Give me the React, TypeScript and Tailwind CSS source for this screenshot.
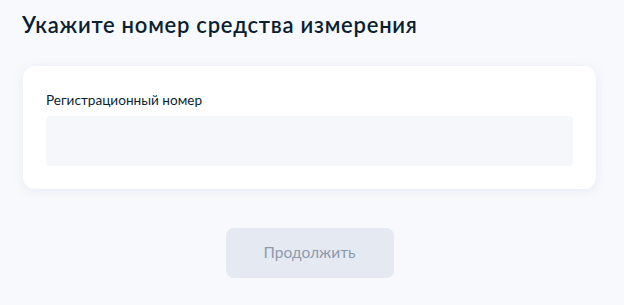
import React from "react";

function App() {
  return (
    <div className="min-h-screen w-full bg-[#f8f9fc] font-['Lato','Noto_Sans',sans-serif]">
      <div className="w-[573px] ml-[23px] pt-[11px]">
        {/* Title */}
        <h1 className="text-[22px] leading-[28px] font-semibold tracking-[0.75px] text-[#0b1f33] -ml-px">
          Укажите номер средства измерения
        </h1>

        {/* Card */}
        <div className="mt-[27px] bg-white rounded-xl shadow-[0_2px_12px_rgba(102,132,182,0.12)] px-[23px] pt-[25px] pb-[23px]">
          <label className="block text-[13.6px] leading-[18px] text-[#0b1f33]">
            Регистрационный номер
          </label>
          <div className="mt-[7px] h-[50px] w-full rounded bg-[#f5f7fa]" />
        </div>

        {/* Continue button */}
        <div className="flex justify-center mt-[39px]">
          <button
            disabled
            className="w-[168px] h-[50px] rounded-lg bg-[#e4e9f2] text-[15.5px] text-[#8d9bad]"
          >
            Продолжить
          </button>
        </div>
      </div>
    </div>
  );
}

export default App;
